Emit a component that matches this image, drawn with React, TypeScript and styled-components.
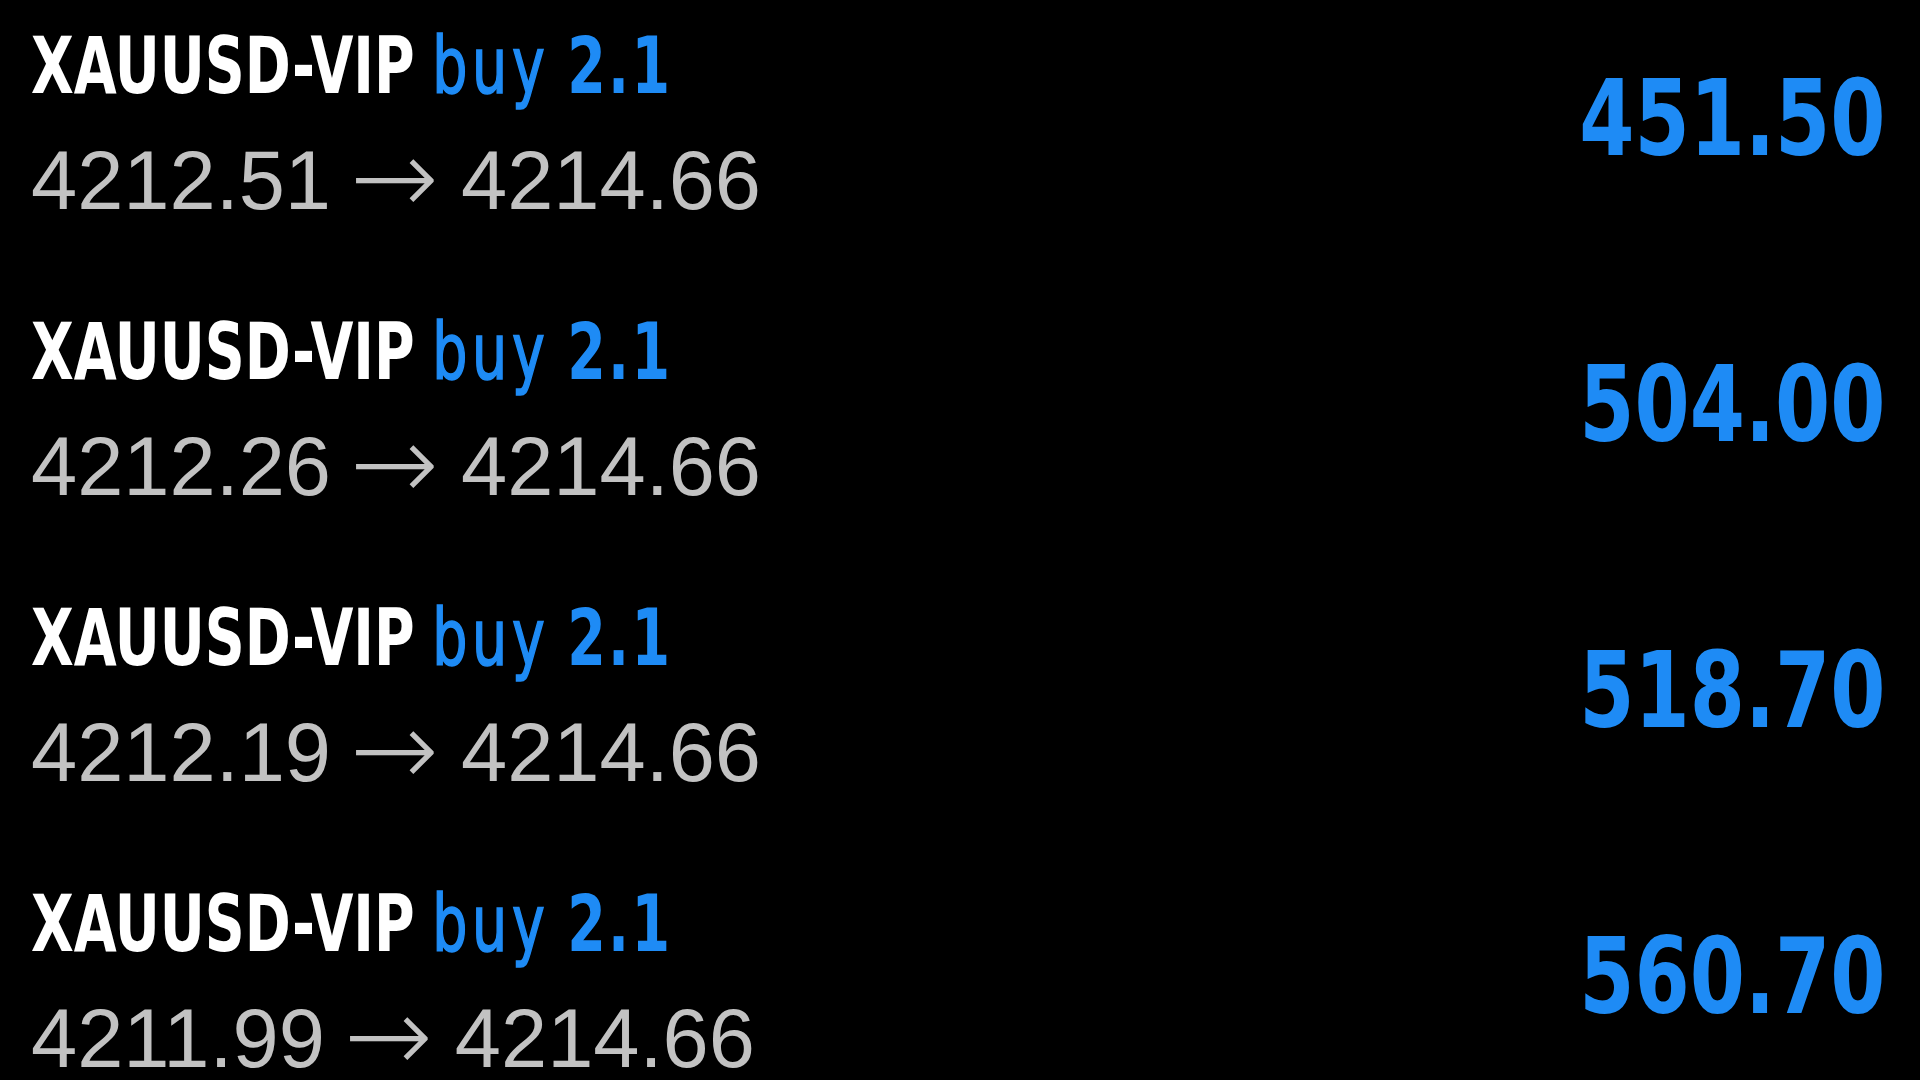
import { createGlobalStyle, styled } from 'styled-components'

const GlobalStyle = createGlobalStyle`
	html, body {
		margin: 0;
		padding: 0;
		background: #000;
	}
	body {
		font-family: 'Liberation Sans', Arial, sans-serif;
	}
`

type Trade = {
	symbol: string
	side: string
	volume: string
	open: string
	close: string
	profit: string
}

const trades: Trade[] = [
	{ symbol: 'XAUUSD-VIP', side: 'buy', volume: '2.1', open: '4212.51', close: '4214.66', profit: '451.50' },
	{ symbol: 'XAUUSD-VIP', side: 'buy', volume: '2.1', open: '4212.26', close: '4214.66', profit: '504.00' },
	{ symbol: 'XAUUSD-VIP', side: 'buy', volume: '2.1', open: '4212.19', close: '4214.66', profit: '518.70' },
	{ symbol: 'XAUUSD-VIP', side: 'buy', volume: '2.1', open: '4211.99', close: '4214.66', profit: '560.70' },
]

const List = styled.div`
	width: 1920px;
	height: 1080px;
	overflow: hidden;
	background: #000;
	padding: 16px 34px 0 31px;
	box-sizing: border-box;
	display: flex;
	flex-direction: column;
`

const Row = styled.div`
	height: 286px;
	flex-shrink: 0;
	display: flex;
	justify-content: space-between;
	align-items: flex-start;
`

const Info = styled.div`
	display: flex;
	flex-direction: column;
`

// the screenshot uses a condensed face, squeeze DejaVu Condensed a bit more
const Title = styled.div`
	font-family: 'DejaVu Sans Condensed', 'DejaVu Sans', sans-serif;
	font-size: 78px;
	line-height: 100px;
	white-space: nowrap;
	transform: scaleX(0.79);
	transform-origin: left center;
`

const Symbol = styled.span`
	color: #fff;
	font-weight: 700;
`

const Side = styled.span<{ $bold?: boolean }>`
	color: #1e8bf5;
	font-weight: ${p => (p.$bold ? 700 : 400)};
	letter-spacing: ${p => (p.$bold ? '3px' : '6px')};
	-webkit-text-stroke: ${p => (p.$bold ? '0' : '1.6px #1e8bf5')};
`

const Prices = styled.div`
	margin-top: 10px;
	font-family: 'Liberation Sans', Arial, sans-serif;
	font-size: 83px;
	line-height: 110px;
	color: #c2c2c2;
	white-space: nowrap;
`

const Arrow = styled.span`
	font-family: 'DejaVu Sans', sans-serif;
	font-weight: 200;
	font-size: 106px;
	line-height: 0;
	vertical-align: -5px;
	margin-left: -4px;
	margin-right: -1px;
`

const Profit = styled.div`
	margin-top: 38px;
	font-family: 'DejaVu Sans Condensed', 'DejaVu Sans', sans-serif;
	font-weight: 700;
	font-size: 105px;
	line-height: 130px;
	color: #1e8bf5;
	white-space: nowrap;
	transform: scaleX(0.84);
	transform-origin: right center;
`

export default function App() {
	return (
		<>
			<GlobalStyle />
			<List>
				{trades.map((trade, i) => (
					<Row key={i}>
						<Info>
							<Title>
								<Symbol>{trade.symbol}</Symbol> <Side>{trade.side}</Side>{' '}
								<Side $bold>{trade.volume}</Side>
							</Title>
							<Prices>
								{trade.open} <Arrow>→</Arrow> {trade.close}
							</Prices>
						</Info>
						<Profit>{trade.profit}</Profit>
					</Row>
				))}
			</List>
		</>
	)
}
